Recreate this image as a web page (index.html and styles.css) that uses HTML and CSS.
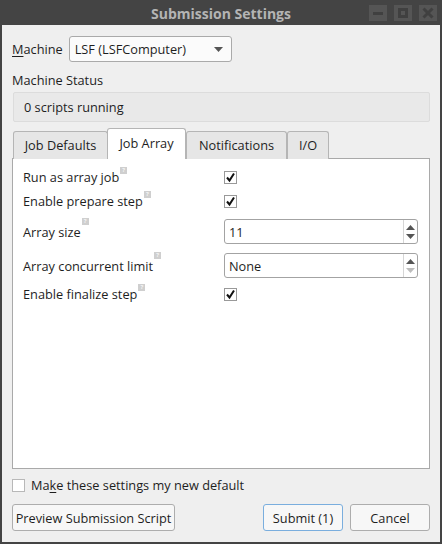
FILE: index.html
```html
<!DOCTYPE html>
<html>
<head>
<meta charset="utf-8">
<title>Submission Settings</title>
<link rel="stylesheet" href="styles.css">
</head>
<body>
<div class="window">
  <header class="titlebar">
    <span></span>
    <span class="title">Submission Settings</span>
    <div class="wm-buttons">
      <span class="wm-btn"><svg width="18" height="16" viewBox="0 0 18 16"><rect x="4" y="7" width="10" height="3" fill="#404040"/></svg></span>
      <span class="wm-btn"><svg width="18" height="16" viewBox="0 0 18 16"><rect x="5.5" y="4.5" width="7" height="7" fill="none" stroke="#404040" stroke-width="3"/></svg></span>
      <span class="wm-btn"><svg width="18" height="16" viewBox="0 0 18 16"><path d="M4.5 3.5 L13.5 12.5 M13.5 3.5 L4.5 12.5" stroke="#404040" stroke-width="3"/></svg></span>
    </div>
  </header>

  <main class="content">
    <div class="machine-row">
      <label class="lbl"><u>M</u>achine</label>
      <div class="combo">
        <span>LSF (LSFComputer)</span>
        <svg class="combo-arrow" width="9" height="5" viewBox="0 0 9 5"><path d="M0 0 H9 L4.5 5 Z" fill="#555"/></svg>
      </div>
    </div>

    <div class="status-label">Machine Status</div>
    <div class="status-box">0 scripts running</div>

    <div class="tabs">
      <div class="tab-bar">
        <span class="tab t1">Job Defaults</span>
        <span class="tab t2 active">Job Array</span>
        <span class="tab t3">Notifications</span>
        <span class="tab t4">I/O</span>
      </div>
      <div class="pane">
        <div class="form-row r1">
          <span class="field-label"><span class="text">Run as array job</span><i class="help">?</i></span>
          <span class="check"><svg width="11" height="11" viewBox="0 0 11 11"><path d="M2 5.5 L4.5 8.5 L9 1.5" fill="none" stroke="#111" stroke-width="2"/></svg></span>
        </div>
        <div class="form-row r2">
          <span class="field-label"><span class="text">Enable prepare step</span><i class="help">?</i></span>
          <span class="check"><svg width="11" height="11" viewBox="0 0 11 11"><path d="M2 5.5 L4.5 8.5 L9 1.5" fill="none" stroke="#111" stroke-width="2"/></svg></span>
        </div>
        <div class="form-row r3">
          <span class="field-label"><span class="text">Array size</span><i class="help">?</i></span>
          <div class="spin">
            <span class="spin-value">11</span>
            <span class="spin-arrows">
              <svg width="9" height="5" viewBox="0 0 9 5"><path d="M0 5 H9 L4.5 0 Z" fill="#555"/></svg>
              <svg width="9" height="5" viewBox="0 0 9 5"><path d="M0 0 H9 L4.5 5 Z" fill="#555"/></svg>
            </span>
          </div>
        </div>
        <div class="form-row r4">
          <span class="field-label"><span class="text">Array concurrent limit</span><i class="help">?</i></span>
          <div class="spin">
            <span class="spin-value">None</span>
            <span class="spin-arrows">
              <svg width="9" height="5" viewBox="0 0 9 5"><path d="M0 5 H9 L4.5 0 Z" fill="#555"/></svg>
              <svg width="9" height="5" viewBox="0 0 9 5"><path d="M0 0 H9 L4.5 5 Z" fill="#bdbdbd"/></svg>
            </span>
          </div>
        </div>
        <div class="form-row r5">
          <span class="field-label"><span class="text">Enable finalize step</span><i class="help">?</i></span>
          <span class="check"><svg width="11" height="11" viewBox="0 0 11 11"><path d="M2 5.5 L4.5 8.5 L9 1.5" fill="none" stroke="#111" stroke-width="2"/></svg></span>
        </div>
      </div>
    </div>

    <div class="default-row">
      <span class="check empty"></span>
      <span class="default-label">Ma<u>k</u>e these settings my new default</span>
    </div>

    <div class="button-row">
      <button class="btn preview">Preview Submission Script</button>
      <span class="spacer"></span>
      <button class="btn submit">Submit (1)</button>
      <button class="btn cancel">Cancel</button>
    </div>
  </main>
</div>
</body>
</html>
```

FILE: styles.css
```css
* { box-sizing: border-box; }

html, body {
  margin: 0;
  padding: 0;
  width: 442px;
  height: 544px;
  overflow: hidden;
  background: #444;
}

body {
  font-family: "Open Sans", "DejaVu Sans", sans-serif;
  font-size: 12.75px;
  color: #1e1e1e;
}

.window {
  width: 442px;
  height: 544px;
  display: flex;
  flex-direction: column;
  background: #444;
  padding: 0 2px 2px 2px;
}

/* window manager title bar */
.titlebar {
  height: 25px;
  display: grid;
  grid-template-columns: 1fr auto 1fr;
  align-items: center;
  flex: none;
}

.title {
  font-weight: bold;
  font-size: 14px;
  color: #b4b4b4;
  padding-top: 1px;
}

.wm-buttons {
  display: flex;
  justify-content: flex-end;
  gap: 7px;
  padding-right: 3px;
}

.wm-btn {
  width: 18px;
  height: 16px;
  background: #555;
  display: block;
}
.wm-btn svg { display: block; }

/* dialog body */
.content {
  flex: 1;
  background: #efefef;
  display: flex;
  flex-direction: column;
  padding: 11px 10px 0 10px;
}

.machine-row {
  display: flex;
  align-items: center;
  gap: 6px;
}

.lbl u, .default-label u { text-decoration-thickness: 1px; text-underline-offset: 2px; }

.combo {
  width: 163px;
  height: 26px;
  border: 1px solid #aaa;
  border-radius: 3px;
  background: #fbfbfb;
  display: flex;
  align-items: center;
  justify-content: space-between;
  padding: 0 8px 0 5px;
}
.combo-arrow { display: block; }

.status-label {
  margin-top: 9px;
  line-height: 18px;
}

.status-box {
  margin-top: 3px;
  margin-left: 1px;
  height: 30px;
  border: 1px solid #dcdcdc;
  border-radius: 2px;
  background: #e9e9e9;
  display: flex;
  align-items: center;
  padding-left: 10px;
}

/* tab widget */
.tabs {
  margin-top: 8px;
  display: flex;
  flex-direction: column;
  flex: none;
}

.tab-bar {
  display: flex;
  align-items: flex-end;
  padding-left: 1px;
  height: 29px;
  position: relative;
  z-index: 1;
  margin-bottom: -1px;
}

.tab {
  height: 28px;
  border: 1px solid #b5b5b5;
  border-bottom: none;
  border-radius: 3px 3px 0 0;
  background: #e6e6e6;
  display: flex;
  align-items: center;
  justify-content: center;
  white-space: nowrap;
  padding: 0 0 1px 0;
}
.t1 { width: 95px; }
.t2 { width: 79px; margin-left: -1px; }
.t3 { width: 101px; }
.t4 { width: 42px; }
.tab.active {
  height: 31px;
  background: #fff;
  padding-bottom: 3px;
}

.pane {
  height: 311px;
  background: #fff;
  border: 1px solid #a9a9a9;
  padding: 10px 10px 0 10px;
  display: flex;
  flex-direction: column;
}

.form-row {
  display: flex;
  align-items: center;
}

.field-label {
  width: 201px;
  height: 100%;
  display: flex;
  align-items: center;
}

.help {
  align-self: flex-start;
  font-style: normal;
  font-size: 6px;
  line-height: 7px;
  width: 7px;
  height: 7px;
  background: #cfcfcf;
  color: #f4f4f4;
  text-align: center;
  font-weight: bold;
  margin-left: 1px;
  margin-top: -2px;
}
.r3 .help, .r4 .help { margin-top: -1px; }

.check {
  width: 13px;
  height: 13px;
  border: 1px solid #999;
  background: #fff;
  display: flex;
  align-items: center;
  justify-content: center;
  flex: none;
}
.check svg { display: block; }

.r1 { height: 16px; }
.r2 { height: 16px; margin-top: 8px; }
.r3 { height: 25px; margin-top: 10px; }
.r4 { height: 25px; margin-top: 9px; }
.r5 { height: 16px; margin-top: 8px; }

.spin {
  width: 194px;
  height: 100%;
  border: 1px solid #a3a3a3;
  border-radius: 3px;
  background: #fff;
  display: flex;
  align-items: center;
}
.spin-value {
  flex: 1;
  padding-left: 4px;
}
.spin-arrows {
  width: 14px;
  height: 100%;
  border-left: 1px solid #d6d6d6;
  display: flex;
  flex-direction: column;
  align-items: center;
  justify-content: center;
  gap: 4px;
}
.spin-arrows svg { display: block; }

/* footer */
.default-row {
  margin-top: 9px;
  display: flex;
  align-items: center;
  gap: 6px;
  height: 14px;
}
.check.empty { border-color: #b8b8b8; }

.button-row {
  margin-top: 12px;
  display: flex;
  align-items: center;
  gap: 7px;
}
.spacer { flex: 1; }

.btn {
  font-family: inherit;
  font-size: 12.75px;
  color: #1e1e1e;
  height: 27px;
  border: 1px solid #adadad;
  border-radius: 3px;
  background: #f7f7f7;
  padding: 0;
}
.btn.preview { width: 163px; }
.btn.submit { width: 80px; border-color: #7aaede; }
.btn.cancel { width: 80px; }
```
